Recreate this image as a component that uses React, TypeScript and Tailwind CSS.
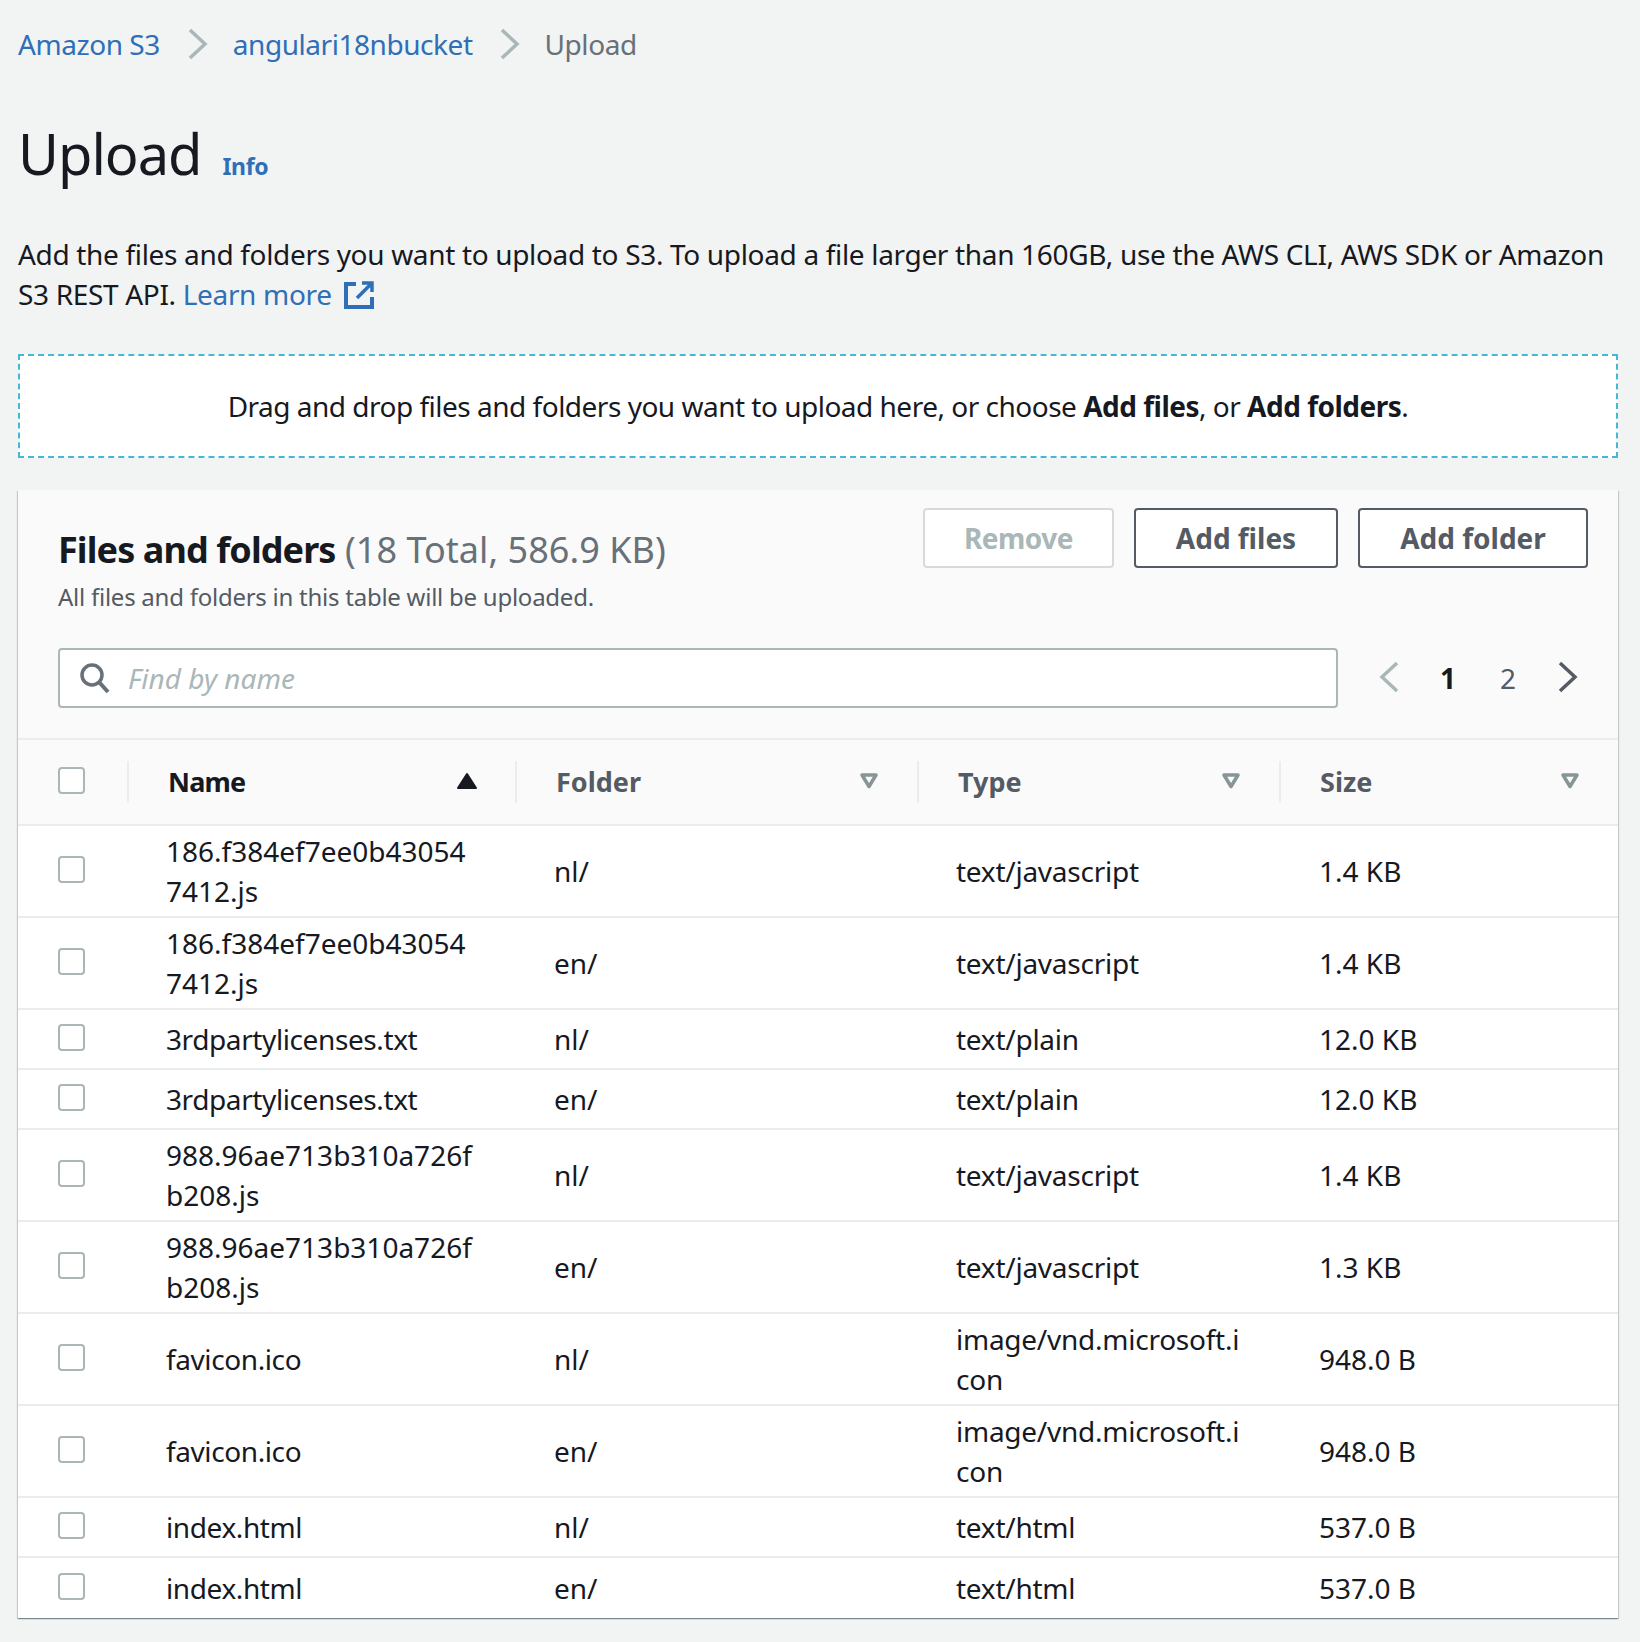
const rows = [
  { name: "186.f384ef7ee0b43054\n7412.js", folder: "nl/", type: "text/javascript", size: "1.4 KB", tall: true },
  { name: "186.f384ef7ee0b43054\n7412.js", folder: "en/", type: "text/javascript", size: "1.4 KB", tall: true },
  { name: "3rdpartylicenses.txt", folder: "nl/", type: "text/plain", size: "12.0 KB", tall: false },
  { name: "3rdpartylicenses.txt", folder: "en/", type: "text/plain", size: "12.0 KB", tall: false },
  { name: "988.96ae713b310a726f\nb208.js", folder: "nl/", type: "text/javascript", size: "1.4 KB", tall: true },
  { name: "988.96ae713b310a726f\nb208.js", folder: "en/", type: "text/javascript", size: "1.3 KB", tall: true },
  { name: "favicon.ico", folder: "nl/", type: "image/vnd.microsoft.i\ncon", size: "948.0 B", tall: true },
  { name: "favicon.ico", folder: "en/", type: "image/vnd.microsoft.i\ncon", size: "948.0 B", tall: true },
  { name: "index.html", folder: "nl/", type: "text/html", size: "537.0 B", tall: false },
  { name: "index.html", folder: "en/", type: "text/html", size: "537.0 B", tall: false },
]

const Checkbox = ({ className = "" }: { className?: string }) => (
  <div className={`w-[27px] h-[27px] rounded-[4px] border-2 border-[#aab7b8] bg-white ${className}`} />
)

const Chevron = ({ dir, color, className = "" }: { dir: "left" | "right"; color: string; className?: string }) => (
  <svg width="20" height="32" viewBox="0 0 20 32" fill="none" className={className}>
    <path d={dir === "right" ? "M2 2 L17 16 L2 30" : "M18 2 L3 16 L18 30"} stroke={color} strokeWidth="3.5" />
  </svg>
)

const FilterIcon = () => (
  <svg width="20" height="18" viewBox="0 0 20 18" fill="none">
    <path d="M3 3 H17 L10 14.5 Z" stroke="#879596" strokeWidth="3.5" strokeLinejoin="round" />
  </svg>
)

const HeaderCell = ({ label, dark, width }: { label: string; dark?: boolean; width: string }) => (
  <div className={`flex items-center ${width}`}>
    <div className="w-[2px] h-[42px] bg-[#eaeded] shrink-0" />
    <span className={`ml-[39px] text-[27px] font-bold ${dark ? "text-[#16191f] tracking-[-0.8px]" : "text-[#545b64]"}`}>{label}</span>
    <div className="ml-auto mr-[38px] -mt-[3px]">
      {dark ? (
        <svg width="20" height="18" viewBox="0 0 20 18">
          <path d="M10 2 L19 16 H1 Z" fill="#16191f" stroke="#16191f" strokeWidth="2" strokeLinejoin="round" />
        </svg>
      ) : (
        <FilterIcon />
      )}
    </div>
  </div>
)

export default function App() {
  return (
    <div
      className="w-[1640px] h-[1642px] bg-[#f2f3f3] pl-[18px] pr-[22px] pt-[24px] text-[#16191f] text-[28px] leading-[40px] overflow-hidden"
      style={{ fontFamily: '"Noto Sans", sans-serif' }}
    >
      <div className="flex items-center h-[40px] tracking-[-0.45px]">
        <span className="text-[#2e6fb7]">Amazon S3</span>
        <Chevron dir="right" color="#aab7b8" className="ml-[28px] mr-[25px]" />
        <span className="text-[#2e6fb7]">angulari18nbucket</span>
        <Chevron dir="right" color="#aab7b8" className="ml-[27px] mr-[25px]" />
        <span className="text-[#687078]">Upload</span>
      </div>

      <div className="flex items-baseline mt-[53px] h-[72px]">
        <h1 className="text-[56px] leading-[72px] font-normal tracking-[-1px]">Upload</h1>
        <a className="ml-[21px] text-[23px] font-bold text-[#2e6fb7] tracking-[-0.4px]">Info</a>
      </div>

      <p className="mt-[45px] tracking-[-0.33px]">
        Add the files and folders you want to upload to S3. To upload a file larger than 160GB, use the AWS CLI, AWS SDK or Amazon S3 REST API.{" "}
        <a className="text-[#2e6fb7]">Learn more</a>
        <svg width="30" height="28" viewBox="0 0 30 28" fill="none" className="inline-block ml-[12px] align-[-4px]">
          <path d="M12 3 H2 V26 H28 V16" stroke="#2e6fb7" strokeWidth="4" />
          <path d="M18 2 H28 V11 M27 3 L13 17" stroke="#2e6fb7" strokeWidth="3.5" />
        </svg>
      </p>

      <div className="mt-[40px] h-[104px] flex items-center justify-center bg-white border-2 border-dashed border-[#44b9d6]">
        <span className="tracking-[-0.5px]">
          Drag and drop files and folders you want to upload here, or choose <b>Add files</b>, or <b>Add folders</b>.
        </span>
      </div>

      <div className="mt-[32px] bg-white shadow-[0_1px_1px_0_rgba(0,28,36,0.3),1px_1px_1px_0_rgba(0,28,36,0.15),-1px_1px_1px_0_rgba(0,28,36,0.15)]">
        <div className="bg-[#fafafa] border-b-2 border-[#eaeded]">
          <div className="flex justify-between pl-[40px] pr-[30px] pt-[18px]">
            <div>
              <div className="mt-[20px] text-[36px] leading-[44px]">
                <b className="tracking-[-0.9px]">Files and folders</b> <span className="text-[#687078] tracking-[0.05px]">(18 Total, 586.9 KB)</span>
              </div>
              <div className="mt-[7px] text-[24px] leading-[36px] text-[#545b64] tracking-[-0.25px]">All files and folders in this table will be uploaded.</div>
            </div>
            <div className="flex gap-[20px]">
              <button className="w-[191px] h-[60px] rounded-[4px] border-2 border-[#d5dbdb] bg-white text-[#aab7b8] text-[28px] font-bold tracking-[-0.5px]">Remove</button>
              <button className="w-[204px] h-[60px] rounded-[4px] border-2 border-[#545b64] bg-white text-[#545b64] text-[28px] font-bold">Add files</button>
              <button className="w-[230px] h-[60px] rounded-[4px] border-2 border-[#545b64] bg-white text-[#545b64] text-[28px] font-bold">Add folder</button>
            </div>
          </div>
          <div className="flex items-center pl-[40px] mt-[33px] mb-[30px]">
            <div className="w-[1280px] h-[60px] flex items-center bg-white rounded-[4px] border-2 border-[#aab7b8]">
              <svg width="32" height="32" viewBox="0 0 32 32" fill="none" className="ml-[19px]">
                <circle cx="13" cy="13" r="10" stroke="#687078" strokeWidth="3.5" />
                <path d="M20 20 L29 30" stroke="#687078" strokeWidth="4" />
              </svg>
              <span className="ml-[17px] italic text-[#aab7b8]">Find by name</span>
            </div>
            <Chevron dir="left" color="#aab7b8" className="ml-[41px] -mt-[2px]" />
            <span className="ml-[39px] w-[20px] font-bold text-center">1</span>
            <span className="ml-[40px] w-[20px] text-[#545b64] text-center">2</span>
            <Chevron dir="right" color="#545b64" className="ml-[40px] -mt-[2px]" />
          </div>
        </div>

        <div className="flex items-center h-[86px] bg-[#fafafa] border-b-2 border-[#eaeded]">
          <div className="w-[109px] pl-[40px] shrink-0">
            <Checkbox className="-mt-[3px]" />
          </div>
          <HeaderCell label="Name" dark width="w-[388px]" />
          <HeaderCell label="Folder" width="w-[402px]" />
          <HeaderCell label="Type" width="w-[362px]" />
          <HeaderCell label="Size" width="w-[339px]" />
        </div>

        {rows.map((row, i) => (
          <div
            key={i}
            className={`flex items-center ${row.tall ? "h-[92px]" : "h-[60px]"} ${i < rows.length - 1 ? "border-b-2 border-[#eaeded]" : ""}`}
          >
            <div className="w-[148px] pl-[40px] shrink-0">
              <Checkbox className="-mt-[3px]" />
            </div>
            <div className={`w-[388px] whitespace-pre-line ${row.name.includes("\n") ? "" : "tracking-[-0.4px]"}`}>{row.name}</div>
            <div className="w-[402px]">{row.folder}</div>
            <div className="w-[363px] whitespace-pre-line tracking-[-0.25px]">{row.type}</div>
            <div>{row.size}</div>
          </div>
        ))}
      </div>
    </div>
  )
}
